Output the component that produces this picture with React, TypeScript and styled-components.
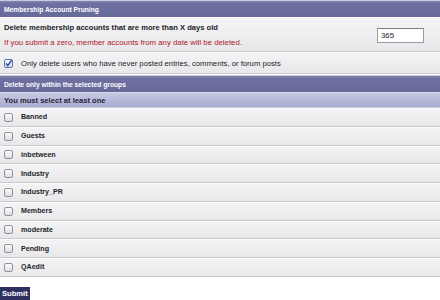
import React, { useState } from "react";
import styled, { createGlobalStyle } from "styled-components";

const GlobalStyle = createGlobalStyle`
  html, body {
    margin: 0;
    padding: 0;
    background: #ffffff;
  }
  body {
    font-family: "Liberation Sans", Arial, sans-serif;
    color: #1e1e22;
  }
`;

const Page = styled.form`
  width: 440px;
  display: flex;
  flex-direction: column;
`;

const Table = styled.div`
  display: flex;
  flex-direction: column;
`;

const Header = styled.div`
  height: 17px;
  padding: 0 4px;
  display: flex;
  align-items: center;
  box-sizing: border-box;
  background: linear-gradient(#8688b4 0, #6f71a2 2px, #676999 100%);
  border-top: 1px solid #c9cade;
  color: #ffffff;
  font-size: 6.7px;
  font-weight: bold;
`;

const SubHeader = styled.div`
  height: 16px;
  padding: 0 4px;
  display: flex;
  align-items: center;
  box-sizing: border-box;
  background: linear-gradient(#c7c9e2, #a8aad0);
  border-top: 1px solid #d8d9ea;
  border-bottom: 1px solid #cfd0e2;
  color: #27283a;
  font-size: 7.6px;
  font-weight: bold;
`;

const Row = styled.div<{ $h: number }>`
  height: ${(p) => p.$h}px;
  padding: 0 4px;
  display: flex;
  align-items: center;
  gap: 8px;
  box-sizing: border-box;
  background: linear-gradient(#f4f4f6, #e8e8ea);
  border-top: 1px solid #fbfbfc;
  border-bottom: 1px solid #c9c9ce;
  font-size: 7.8px;
`;

const TextCol = styled.div`
  flex: 1;
  display: flex;
  flex-direction: column;
  gap: 6px;
`;

const Label = styled.span<{ $size: number; $bold?: boolean }>`
  font-weight: ${(p) => (p.$bold ? "bold" : "normal")};
  font-size: ${(p) => p.$size}px;
  color: #232327;
`;

const Warning = styled.span`
  color: #b0162a;
`;

const DaysInput = styled.input`
  width: 47px;
  height: 15px;
  box-sizing: border-box;
  margin-right: 12px;
  margin-top: 1px;
  padding: 0 3px;
  border: 1px solid #9a9aa2;
  border-top-color: #7c7c84;
  background: #ffffff;
  font-family: inherit;
  font-size: 7.8px;
  color: #222;
  outline: none;
`;

const Gap = styled.div<{ $h: number }>`
  height: ${(p) => p.$h}px;
`;

const Submit = styled.button`
  align-self: flex-start;
  height: 13px;
  padding: 0 2px;
  border: none;
  background: #2f2f60;
  color: #ffffff;
  font-family: inherit;
  font-size: 7.6px;
  font-weight: bold;
  cursor: pointer;
`;

const BoxButton = styled.span`
  display: inline-flex;
  width: 9px;
  height: 9px;
  cursor: pointer;
`;

const Check = ({ on, onToggle }: { on: boolean; onToggle: () => void }) => (
  <BoxButton onClick={onToggle}>
    <svg width="9" height="9" viewBox="0 0 9 9">
      <defs>
        <linearGradient id="cb" x1="0" y1="0" x2="0" y2="1">
          <stop offset="0" stopColor="#ffffff" />
          <stop offset="1" stopColor="#dcdce0" />
        </linearGradient>
      </defs>
      <rect x="0.5" y="0.5" width="8" height="8" rx="1.6" fill="url(#cb)" stroke={on ? "#5a6fb0" : "#8e8e96"} />
      {on && (
        <path d="M2 4.6 L3.8 6.6 L7.6 1.2" fill="none" stroke="#2a4fb8" strokeWidth="1.5" />
      )}
    </svg>
  </BoxButton>
);

const groups = [
  "Banned",
  "Guests",
  "inbetween",
  "Industry",
  "Industry_PR",
  "Members",
  "moderate",
  "Pending",
  "QAedit",
];

const App = () => {
  const [days, setDays] = useState("365");
  const [neverPosted, setNeverPosted] = useState(true);
  const [picked, setPicked] = useState<string[]>([]);

  const toggle = (g: string) =>
    setPicked((p) => (p.includes(g) ? p.filter((x) => x !== g) : [...p, g]));

  return (
    <>
      <GlobalStyle />
      <Page onSubmit={(e) => e.preventDefault()}>
        <Table>
          <Header>Membership Account Pruning</Header>
          <Row $h={35}>
            <TextCol>
              <Label $bold $size={7.6}>
                Delete membership accounts that are more than X days old
              </Label>
              <Warning>If you submit a zero, member accounts from any date will be deleted.</Warning>
            </TextCol>
            <DaysInput value={days} onChange={(e) => setDays(e.target.value)} />
          </Row>
          <Row $h={22}>
            <Check on={neverPosted} onToggle={() => setNeverPosted(!neverPosted)} />
            <Label $size={7.7}>
              Only delete users who have never posted entries, comments, or forum posts
            </Label>
          </Row>
        </Table>
        <Gap $h={1} />
        <Table>
          <Header>Delete only within the selected groups</Header>
          <SubHeader>You must select at least one</SubHeader>
          {groups.map((g) => (
            <Row key={g} $h={18.75}>
              <Check on={picked.includes(g)} onToggle={() => toggle(g)} />
              <Label $bold $size={7.1}>
                {g}
              </Label>
            </Row>
          ))}
        </Table>
        <Gap $h={10} />
        <Submit type="submit">Submit</Submit>
      </Page>
    </>
  );
};

export default App;
